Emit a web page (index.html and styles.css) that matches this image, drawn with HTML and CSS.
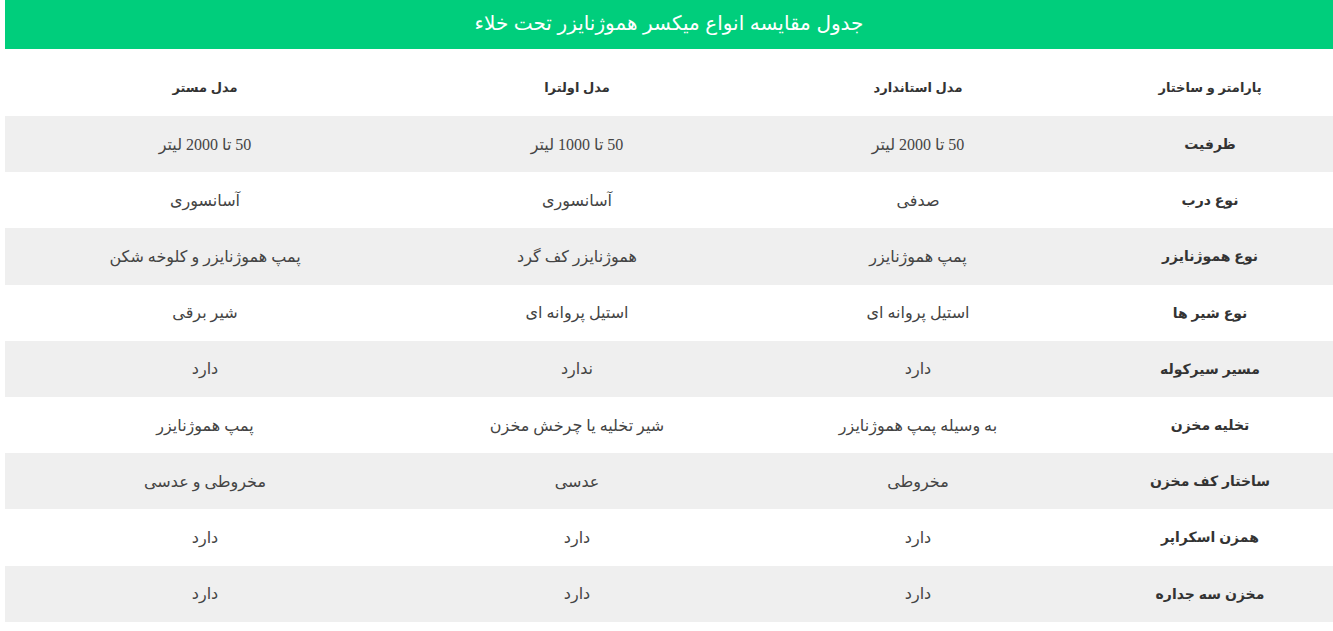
FILE: index.html
```html
<!DOCTYPE html>
<html lang="fa" dir="rtl">
<head>
<meta charset="utf-8">
<link rel="stylesheet" href="styles.css">
</head>
<body>
<div class="wrap">
  <div class="title">جدول مقایسه انواع میکسر هموژنایزر تحت خلاء</div>
  <table class="cmp">
    <colgroup>
      <col class="c1"><col class="c2"><col class="c3"><col class="c4">
    </colgroup>
    <thead>
      <tr><th>پارامتر و ساختار</th><th>مدل استاندارد</th><th>مدل اولترا</th><th>مدل مستر</th></tr>
    </thead>
    <tbody>
      <tr><th>ظرفیت</th><td>50 تا 2000 لیتر</td><td>50 تا 1000 لیتر</td><td>50 تا 2000 لیتر</td></tr>
      <tr><th>نوع درب</th><td>صدفی</td><td>آسانسوری</td><td>آسانسوری</td></tr>
      <tr><th>نوع هموژنایزر</th><td>پمپ هموژنایزر</td><td>هموژنایزر کف گرد</td><td>پمپ هموژنایزر و کلوخه شکن</td></tr>
      <tr><th>نوع شیر ها</th><td>استیل پروانه ای</td><td>استیل پروانه ای</td><td>شیر برقی</td></tr>
      <tr><th>مسیر سیرکوله</th><td>دارد</td><td>ندارد</td><td>دارد</td></tr>
      <tr><th>تخلیه مخزن</th><td>به وسیله پمپ هموژنایزر</td><td>شیر تخلیه یا چرخش مخزن</td><td>پمپ هموژنایزر</td></tr>
      <tr><th>ساختار کف مخزن</th><td>مخروطی</td><td>عدسی</td><td>مخروطی و عدسی</td></tr>
      <tr><th>همزن اسکراپر</th><td>دارد</td><td>دارد</td><td>دارد</td></tr>
      <tr><th>مخزن سه جداره</th><td>دارد</td><td>دارد</td><td>دارد</td></tr>
    </tbody>
  </table>
</div>
</body>
</html>
```
FILE: styles.css
```css
html, body {
  margin: 0;
  padding: 0;
  background: #ffffff;
}
.wrap {
  margin-left: 5px;
  direction: rtl;
}
.title {
  height: 49px;
  background: #00ce7c;
  color: #ffffff;
  font-family: "Liberation Sans", "DejaVu Sans", sans-serif;
  font-size: 20px;
  line-height: 46px;
  text-align: center;
}
.cmp {
  margin-top: 10px;
  width: 1328px;
  border-collapse: collapse;
  table-layout: fixed;
  font-family: "Liberation Serif", "DejaVu Sans", serif;
  color: #333333;
}
.c1 { width: 246px; }
.c2 { width: 338px; }
.c3 { width: 344px; }
.c4 { width: 400px; }
.cmp th, .cmp td {
  height: 56.2px;
  padding: 0 8px;
  text-align: center;
  vertical-align: middle;
}
.cmp thead th {
  height: 57px;
  font-family: "Liberation Sans", "DejaVu Sans", sans-serif;
  font-size: 13px;
  font-weight: bold;
  color: #333333;
}
.cmp tbody th {
  font-family: "Liberation Sans", "DejaVu Sans", sans-serif;
  font-size: 14px;
  font-weight: bold;
  color: #333333;
}
.cmp tbody td {
  font-size: 16px;
  font-weight: normal;
  color: #444444;
}
.cmp tbody tr:nth-child(odd) {
  background: #efefef;
}
```
